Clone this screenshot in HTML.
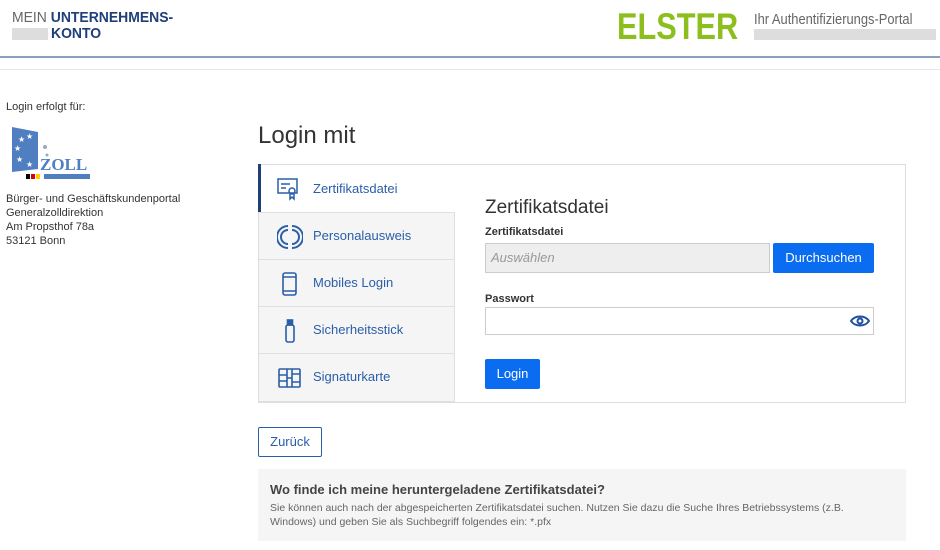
<!DOCTYPE html>
<html><head><meta charset="utf-8"><style>
*{margin:0;padding:0;box-sizing:border-box}
body{width:940px;height:550px;overflow:hidden;background:#fff;font-family:"Liberation Sans",sans-serif;color:#333;position:relative}
.a{position:absolute;white-space:nowrap}
.tab{position:absolute;left:259px;width:195px;height:47px;background:#f5f5f5;border-top:1px solid #e0e0e0;}
.tab span{position:absolute;left:54px;top:15px;font-size:13px;color:#2a5ea8}
.tab svg{position:absolute;left:18px;top:11px}
</style></head><body>
<div class="a" style="left:12px;top:9px;font-size:15px;color:#666;transform:scaleX(.93);transform-origin:left">MEIN <b style="color:#1f3f7a">UNTERNEHMENS-</b></div>
<div class="a" style="left:12px;top:28px;width:36px;height:12px;background:#ddd"></div>
<div class="a" style="left:51px;top:25px;font-size:15px;font-weight:bold;color:#1f3f7a;transform:scaleX(.93);transform-origin:left">KONTO</div>
<div class="a" style="left:617px;top:6px;font-size:37px;font-weight:bold;color:#8cbf1e;transform:scaleX(.83);transform-origin:left">ELSTER</div>
<div class="a" style="left:754px;top:11px;font-size:15px;color:#666;transform:scaleX(.86);transform-origin:left">Ihr Authentifizierungs-Portal</div>
<div class="a" style="left:754px;top:29px;width:182px;height:11px;background:#ddd"></div>
<div class="a" style="left:0;top:56px;width:940px;height:2px;background:#8aa0bf"></div>
<div class="a" style="left:0;top:69px;width:940px;height:1px;background:#e6e6e6"></div>

<div class="a" style="left:6px;top:101px;font-size:11px">Login erfolgt für:</div>
<svg class="a" style="left:10px;top:125px" width="82" height="56" viewBox="0 0 82 56">
<polygon points="2,2 28,7 28,44 2,47" fill="#4f7fc0"/>
<text x="30" y="45" font-family="Liberation Serif" font-weight="bold" font-size="17" fill="#4f7fc0">ZOLL</text>
<g fill="#fff" font-size="8"><text x="8" y="17">★</text><text x="16" y="14">★</text><text x="4" y="26">★</text><text x="6" y="37">★</text><text x="16" y="42">★</text></g>
<circle cx="35" cy="22" r="2" fill="#9ab"/><circle cx="37" cy="30" r="1.5" fill="#9ab"/>
<rect x="16" y="49" width="4" height="5" fill="#000"/><rect x="21" y="49" width="4" height="5" fill="#d00"/><rect x="26" y="49" width="4" height="5" fill="#fc0"/><rect x="34" y="49" width="46" height="5" fill="#4f7fc0"/>
</svg>
<div class="a" style="left:6px;top:192px;font-size:11px;line-height:14px">Bürger- und Geschäftskundenportal<br>Generalzolldirektion<br>Am Propsthof 78a<br>53121 Bonn</div>

<div class="a" style="left:258px;top:122px;font-size:24px;color:#333">Login mit</div>
<div class="a" style="left:258px;top:164px;width:648px;height:239px;border:1px solid #ddd"></div>
<div class="a" style="left:258px;top:164px;width:3px;height:48px;background:#1f3f7a"></div>
<svg class="a" style="left:276px;top:177px" width="24" height="24" fill="none" stroke="#2a5ea8" stroke-width="1.5"><rect x="2" y="2" width="19" height="14"/><path d="M5 7h9M5 11h5"/><circle cx="16" cy="14" r="3"/><path d="M14 17v5l2-2 2 2v-5"/></svg>
<div class="a" style="left:313px;top:181px;font-size:13px;color:#2a5ea8">Zertifikatsdatei</div>
<div class="tab" style="top:212px"><svg width="26" height="26" fill="none" stroke="#2a5ea8" stroke-width="2"><path d="M11 2A11 11 0 0 0 11 24M15 2A11 11 0 0 1 15 24M11 6A7 7 0 0 0 11 20M15 6A7 7 0 0 1 15 20"/></svg><span>Personalausweis</span></div>
<div class="tab" style="top:259px"><svg width="26" height="26" fill="none" stroke="#2a5ea8" stroke-width="1.6"><rect x="6" y="2" width="13" height="22" rx="2"/><path d="M6 6h13M6 20h13"/></svg><span>Mobiles Login</span></div>
<div class="tab" style="top:306px"><svg width="26" height="26" fill="none" stroke="#2a5ea8" stroke-width="1.6"><rect x="9" y="7" width="8" height="17" rx="2"/><rect x="10.5" y="2" width="5" height="5" fill="#2a5ea8"/></svg><span>Sicherheitsstick</span></div>
<div class="tab" style="top:353px;height:49px;border-bottom:1px solid #e0e0e0"><svg width="26" height="26" fill="none" stroke="#2a5ea8" stroke-width="1.6"><rect x="2" y="4" width="21" height="18" rx="1"/><path d="M10 4v18M15 4v18M2 10h8M2 16h8M15 9h8M15 17h8M10 13h5"/></svg><span>Signaturkarte</span></div>
<div class="a" style="left:454px;top:212px;width:1px;height:190px;background:#e0e0e0"></div>

<div class="a" style="left:485px;top:197px;font-size:19px;color:#333">Zertifikatsdatei</div>
<div class="a" style="left:485px;top:226px;font-size:11px;font-weight:bold;color:#333">Zertifikatsdatei</div>
<div class="a" style="left:485px;top:243px;width:285px;height:30px;background:#eee;border:1px solid #ccc"></div>
<div class="a" style="left:491px;top:250px;font-size:13px;font-style:italic;color:#999">Auswählen</div>
<div class="a" style="left:773px;top:243px;width:101px;height:30px;background:#0a6cf0;border-radius:2px;color:#fff;font-size:13px;text-align:center;line-height:30px">Durchsuchen</div>
<div class="a" style="left:485px;top:293px;font-size:11px;font-weight:bold;color:#333">Passwort</div>
<div class="a" style="left:485px;top:307px;width:389px;height:28px;border:1px solid #ccc"></div>
<svg class="a" style="left:849px;top:313px" width="22" height="16" fill="none" stroke="#1f4fa0" stroke-width="2"><path d="M2 8C6 2 16 2 20 8C16 14 6 14 2 8Z"/><circle cx="11" cy="8" r="2.5"/></svg>
<div class="a" style="left:485px;top:359px;width:55px;height:30px;background:#0a6cf0;border-radius:2px;color:#fff;font-size:13px;text-align:center;line-height:30px">Login</div>

<div class="a" style="left:258px;top:427px;width:64px;height:30px;border:1px solid #2a5ea8;border-radius:2px;color:#2a5ea8;font-size:13px;text-align:center;line-height:28px">Zurück</div>
<div class="a" style="left:258px;top:469px;width:648px;height:72px;background:#f5f5f5"></div>
<div class="a" style="left:270px;top:482px;font-size:13px;font-weight:bold;color:#444">Wo finde ich meine heruntergeladene Zertifikatsdatei?</div>
<div class="a" style="left:270px;top:501px;font-size:10.5px;line-height:14px;color:#666">Sie können auch nach der abgespeicherten Zertifikatsdatei suchen. Nutzen Sie dazu die Suche Ihres Betriebssystems (z.B.<br>Windows) und geben Sie als Suchbegriff folgendes ein: *.pfx</div>
</body></html>
